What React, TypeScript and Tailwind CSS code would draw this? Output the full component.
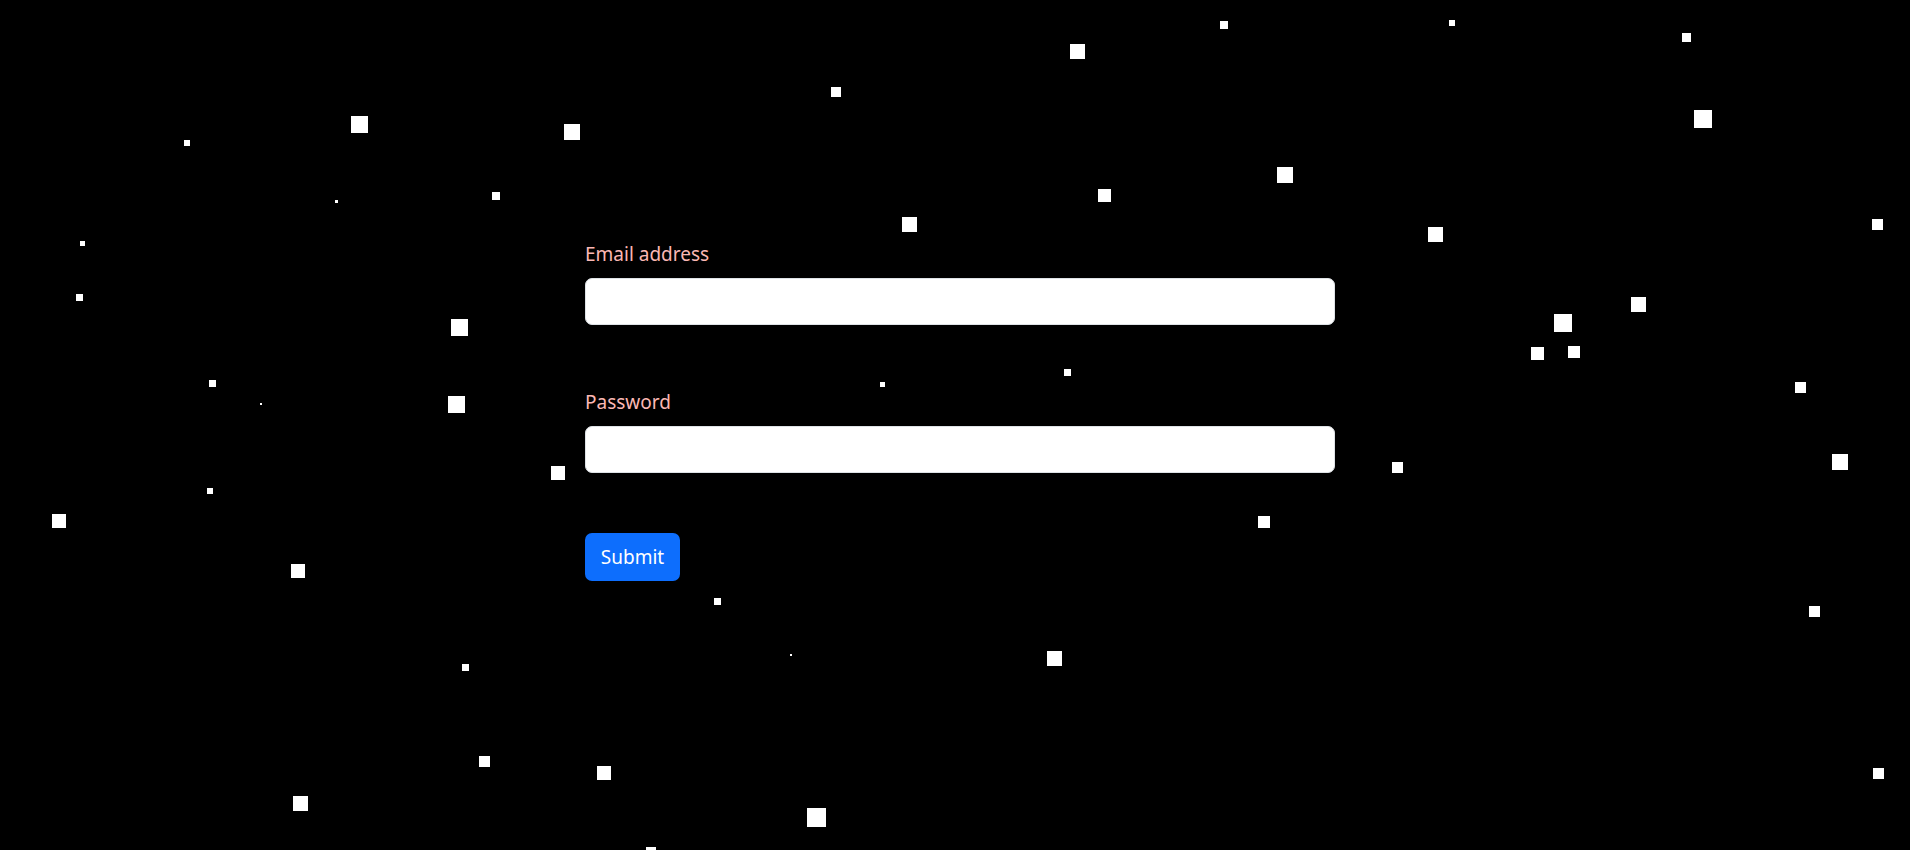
import React from "react";

const stars: [number, number, number][] = [
  [351, 116, 17], [184, 140, 6], [564, 124, 16], [335, 200, 3], [492, 192, 8],
  [80, 241, 5], [1220, 21, 8], [1070, 44, 15], [831, 87, 10], [1098, 189, 13],
  [902, 217, 15], [1277, 167, 16], [1449, 20, 6], [1682, 33, 9], [1694, 110, 18],
  [1428, 227, 15], [1872, 219, 11], [76, 294, 7], [451, 319, 17], [209, 380, 7],
  [260, 403, 2], [448, 396, 17], [551, 466, 14], [207, 488, 6], [52, 514, 14],
  [291, 564, 14], [880, 382, 5], [1064, 369, 7], [1258, 516, 12], [1631, 297, 15],
  [1554, 314, 18], [1531, 347, 13], [1568, 346, 12], [1795, 382, 11], [1392, 462, 11],
  [1832, 454, 16], [462, 664, 7], [479, 756, 11], [597, 766, 14], [293, 796, 15],
  [714, 598, 7], [790, 654, 2], [1047, 651, 15], [807, 808, 19], [646, 847, 10],
  [1809, 606, 11], [1873, 768, 11],
];

export default function App() {
  return (
    <div
      className="relative h-[850px] w-full overflow-hidden bg-black"
      style={{ fontFamily: '"Noto Sans", "Open Sans", sans-serif' }}
    >
      {stars.map(([x, y, s], i) => (
        <div
          key={i}
          className="absolute bg-white"
          style={{ left: x, top: y, width: s, height: s }}
        />
      ))}
      <div className="relative pl-[585px] pt-[239px]">
        <form className="flex w-[750px] flex-col" onSubmit={(e) => e.preventDefault()}>
          <label className="mb-[9px] text-[19px] leading-[30px] text-[#fbb8b4]">Email address</label>
          <input
            type="email"
            className="h-[47px] w-full rounded-[7px] border border-[#dee2e6] bg-white px-[15px] text-[19px] outline-none"
          />
          <label className="mb-[9px] mt-[62px] text-[19px] leading-[30px] text-[#fbb8b4]">Password</label>
          <input
            type="password"
            className="h-[47px] w-full rounded-[7px] border border-[#dee2e6] bg-white px-[15px] text-[19px] outline-none"
          />
          <div className="mt-[60px]">
            <button
              type="submit"
              className="h-[48px] w-[95px] rounded-[7px] bg-[#0d6efd] text-[19px] leading-[30px] text-white"
            >
              Submit
            </button>
          </div>
        </form>
      </div>
    </div>
  );
}
